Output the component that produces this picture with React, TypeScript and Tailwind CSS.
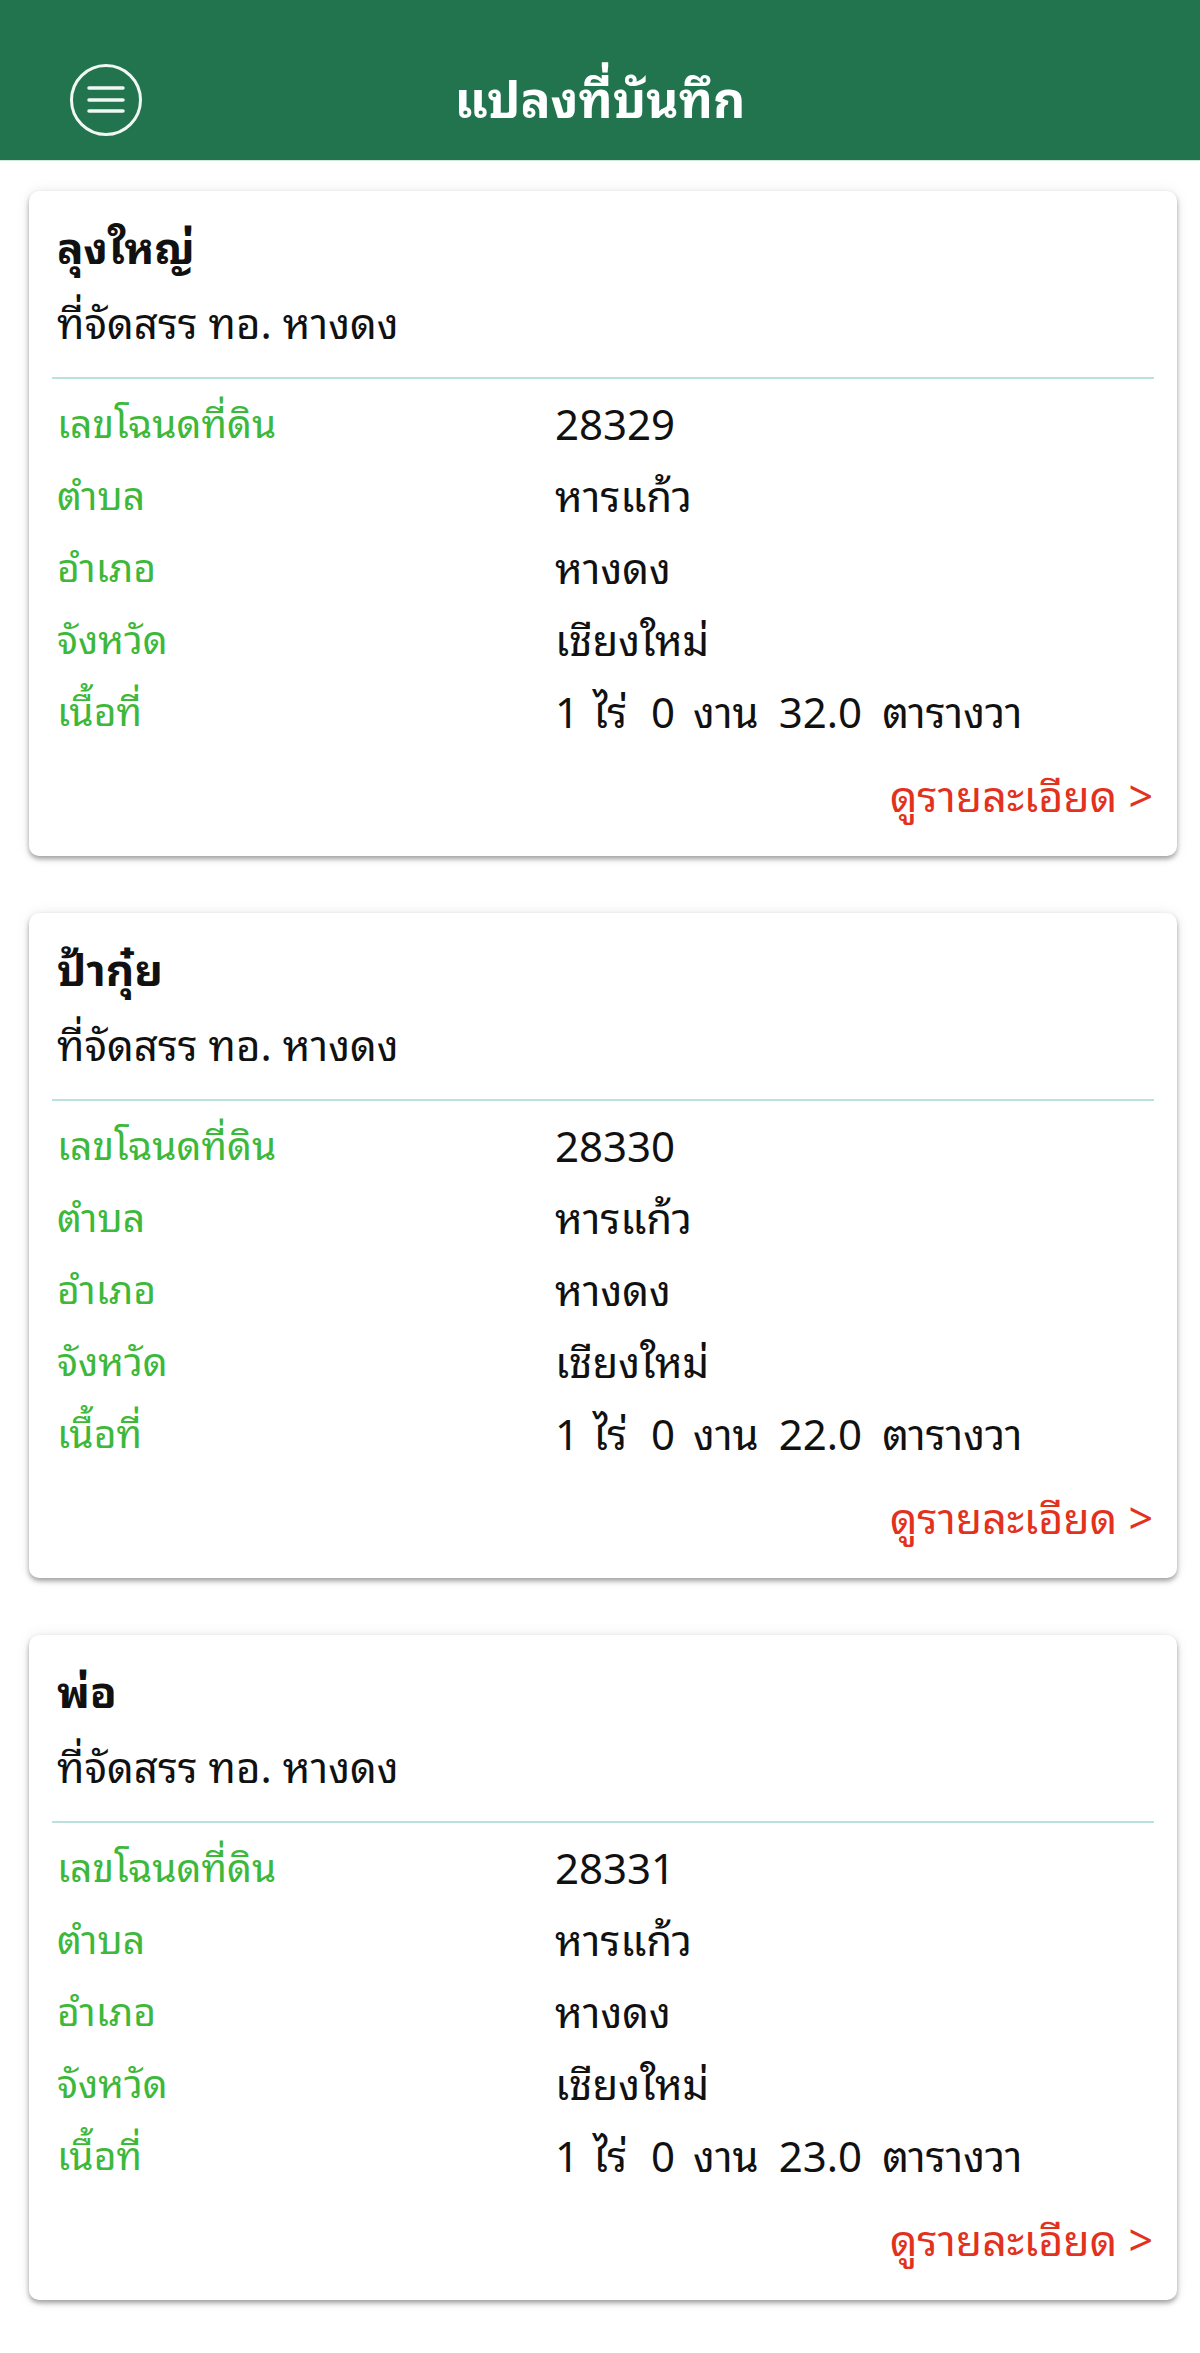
import React from "react";

type Plot = {
  name: string;
  place: string;
  deed: string;
  tambon: string;
  amphoe: string;
  province: string;
  area: string;
};

const plots: Plot[] = [
  { name: "ลุงใหญ่", place: "ที่จัดสรร ทอ. หางดง", deed: "28329", tambon: "หารแก้ว", amphoe: "หางดง", province: "เชียงใหม่", area: "32.0" },
  { name: "ป้ากุ๋ย", place: "ที่จัดสรร ทอ. หางดง", deed: "28330", tambon: "หารแก้ว", amphoe: "หางดง", province: "เชียงใหม่", area: "22.0" },
  { name: "พ่อ", place: "ที่จัดสรร ทอ. หางดง", deed: "28331", tambon: "หารแก้ว", amphoe: "หางดง", province: "เชียงใหม่", area: "23.0" },
];

const MenuIcon = () => (
  <svg width="74" height="74" viewBox="0 0 74 74" fill="none">
    <circle cx="37" cy="37" r="34.5" stroke="#f1f7f3" strokeWidth="3" />
    <path d="M20 25h34M20 37h34M20 48h34" stroke="#f1f7f3" strokeWidth="3.5" strokeLinecap="round" />
  </svg>
);

const Row = ({ label, value }: { label: string; value: React.ReactNode }) => (
  <div className="flex h-[72px] items-center">
    <div className="w-[498px] shrink-0 text-[39px] text-[#3db83a]">{label}</div>
    <div className="whitespace-pre text-[42px] text-[#111]">{value}</div>
  </div>
);

// area reads "1 ไร่ 0 งาน xx.x ตารางวา" with wide gaps between parts
const Area = ({ wa }: { wa: string }) => (
  <span className="flex items-baseline">
    <span>1</span>
    <span className="ml-[14px]">ไร่</span>
    <span className="ml-[24px]">0</span>
    <span className="ml-[18px]">งาน</span>
    <span className="ml-[20px]">{wa}</span>
    <span className="ml-[20px]">ตารางวา</span>
  </span>
);

const PlotCard = ({ plot }: { plot: Plot }) => (
  <div className="ml-[29px] mr-[23px] rounded-[10px] bg-white pt-[17px] pb-[27px] shadow-[0_3px_5px_rgba(0,0,0,0.35),0_0_14px_rgba(0,0,0,0.08)]">
    <div className="px-[28px] text-[44px] leading-[72px] font-bold text-[#111]">{plot.name}</div>
    <div className="mt-[4px] px-[28px] text-[42px] leading-[72px] text-[#111]">{plot.place}</div>
    <div className="mx-[23px] mt-[21px] h-[2px] bg-[#b9e2dd]" />
    <div className="mt-[6px] px-[28px]">
      <Row label="เลขโฉนดที่ดิน" value={plot.deed} />
      <Row label="ตำบล" value={plot.tambon} />
      <Row label="อำเภอ" value={plot.amphoe} />
      <Row label="จังหวัด" value={plot.province} />
      <Row label="เนื้อที่" value={<Area wa={plot.area} />} />
    </div>
    <div className="mt-[12px] flex justify-end pr-[24px] text-[43px] leading-[72px] text-[#e2321d]">
      ดูรายละเอียด &gt;
    </div>
  </div>
);

export default function App() {
  return (
    <div
      className="min-h-[2353px] bg-white"
      style={{ fontFamily: '"Noto Sans Thai Looped", "Noto Sans Thai", "Noto Sans", "DejaVu Sans", sans-serif' }}
    >
      <header className="relative flex h-[161px] items-center justify-center border-b border-[#cfe8da] bg-[#21744e]">
        <div className="absolute left-[69px] top-[63px]">
          <MenuIcon />
        </div>
        <h1 className="mt-[31px] text-[50px] font-bold text-white">แปลงที่บันทึก</h1>
      </header>
      <div className="flex flex-col gap-[57px] pt-[30px] pb-[40px]">
        {plots.map((p) => (
          <PlotCard key={p.deed} plot={p} />
        ))}
      </div>
    </div>
  );
}
